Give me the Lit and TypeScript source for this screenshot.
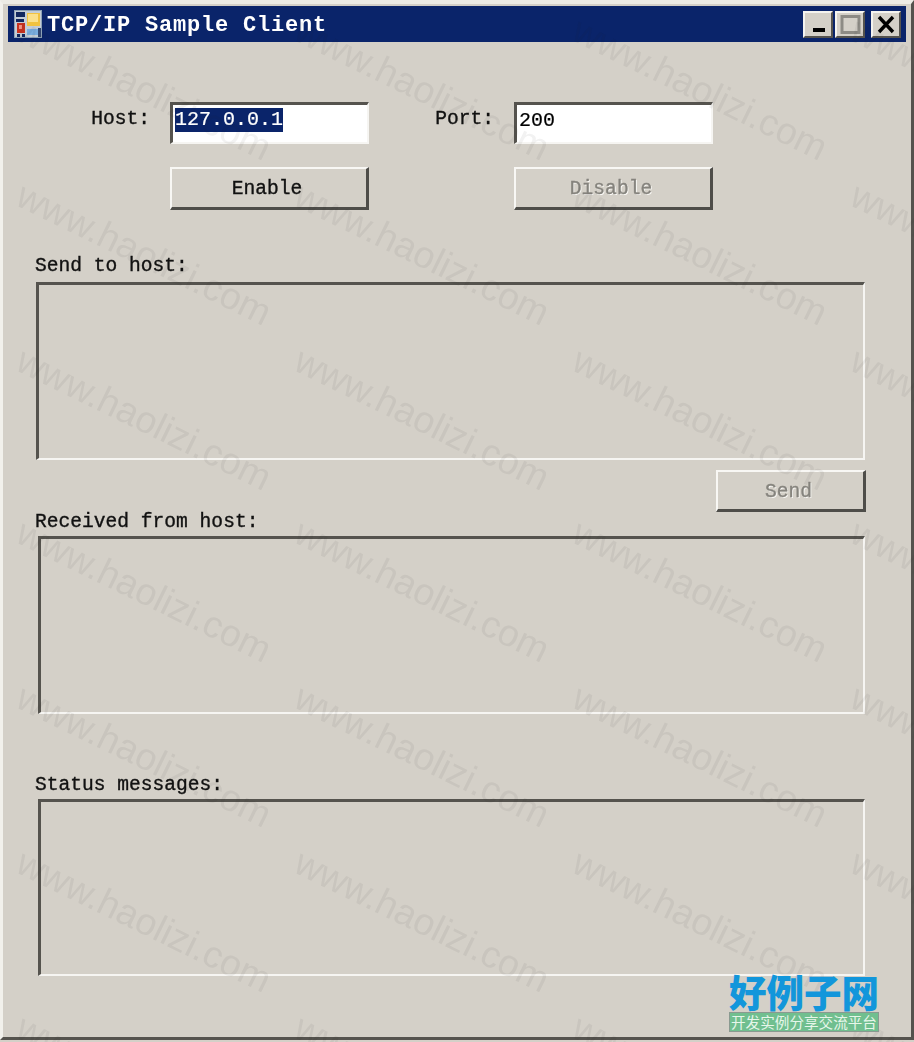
import { LitElement, html, css } from "lit";
import { customElement } from "lit/decorators.js";

const COLS = [144, 422, 700, 978];
const ROWS = [89, 254, 419, 591, 756, 921, 1086];

@customElement("app-root")
export class AppRoot extends LitElement {
  static styles = css`
    :host { display: block; width: 914px; height: 1042px; overflow: hidden; position: relative; background: #d4d0c8; }
    * { box-sizing: border-box; }
    .window {
      width: 914px; height: 1040px; background: #d4d0c8;
      border-top: 4px solid #ecebe5; border-left: 3px solid #f2f1ec;
      border-right: 3px solid #55534e; border-bottom: 3px solid #55534e;
      padding: 2px 5px 0 5px;
      font-family: "Liberation Mono", monospace; font-size: 19.6px; color: #111;
      -webkit-text-stroke: 0.35px currentColor;
      filter: blur(0.45px);
    }
    .titlebar {
      height: 36px; background: #0a246a; display: flex; align-items: center;
      padding: 0 5px 0 6px; color: #fff;
    }
    .appicon { width: 28px; height: 28px; flex: none; }
    .title { margin: 3px 0 0 5px; font-weight: 700; font-size: 22px; letter-spacing: 0.8px; -webkit-text-stroke: 0; }
    .caption { margin-left: auto; display: flex; gap: 2px; }
    .capbtn {
      width: 30px; height: 27px; background: #d4d0c8; display: flex; align-items: center; justify-content: center;
      border-top: 2px solid #f4f3ef; border-left: 2px solid #f4f3ef;
      border-right: 2px solid #55534e; border-bottom: 2px solid #55534e;
    }
    .capbtn.close { margin-left: 4px; }
    .conn {
      display: grid; grid-template-columns: 162px 199px 145px 199px; grid-template-rows: 42px 43px;
      row-gap: 23px; margin-top: 60px;
    }
    .label { line-height: 24px; white-space: pre; }
    .conn .label { justify-self: end; align-self: start; padding-top: 5px; }
    .conn .host { padding-right: 20px; }
    .conn .port { padding-right: 20px; }
    .input {
      background: #fff; border-top: 3px solid #55534e; border-left: 3px solid #55534e;
      border-right: 2px solid #f6f5f2; border-bottom: 2px solid #f6f5f2;
      font-family: "Liberation Mono", monospace; font-size: 20px; line-height: 30px; padding: 1px 0 0 2px;
      color: #000; -webkit-text-stroke: 0.2px currentColor;
    }
    .sel { background: #0a246a; color: #fff; display: inline-block; height: 24px; line-height: 24px; margin-top: 2px; vertical-align: top; }
    .btn {
      background: #d4d0c8; border-top: 2px solid #f8f7f4; border-left: 2px solid #f8f7f4;
      border-right: 3px solid #4e4d49; border-bottom: 3px solid #4e4d49;
      display: flex; align-items: center; justify-content: center; font-family: inherit; font-size: 19.6px; color: #111; padding: 0 4px 0 0;
    }
    .btn span { position: relative; top: 1px; }
    .btn.off { color: #85837d; text-shadow: 1px 1px 0 #fbfaf7; }
    .box {
      background: transparent; border-top: 3px solid #55534e; border-left: 3px solid #55534e;
      border-right: 2px solid #f6f5f2; border-bottom: 2px solid #f6f5f2;
      height: 178px; width: 829px;
    }
    .send-label { margin: 44px 0 0 27px; }
    .send-box { margin: 4px 0 0 28px; }
    .send-row { display: flex; justify-content: flex-end; padding-right: 40px; margin-top: 10px; }
    .send-btn { width: 150px; height: 42px; }
    .recv-label { margin: -2px 0 0 27px; }
    .recv-box { margin: 2px 0 0 30px; width: 827px; }
    .stat-label { margin: 59px 0 0 27px; }
    .stat-box { margin: 2px 0 0 30px; width: 827px; height: 177px; }
    .marks { position: absolute; inset: 0; pointer-events: none; overflow: hidden; filter: blur(0.4px); }
    .mark {
      position: absolute; white-space: nowrap; font-family: "Liberation Sans", sans-serif; font-size: 37.6px;
      color: rgba(40, 38, 36, 0.058); transform: translate(-50%, -50%) rotate(26deg);
    }
    .brand { position: absolute; left: 729px; top: 970px; width: 150px; }
    .brand-name {
      color: #1296db; font-family: "Noto Sans CJK SC", sans-serif; font-weight: 900; font-size: 37.5px; line-height: 42px;
      white-space: nowrap; text-align: center;
    }
    .brand-sub {
      background: #70bf8f; color: #e6f6ea; border: 1px solid #8a9a90; height: 20px; line-height: 18px;
      font-family: "Noto Sans CJK SC", sans-serif; font-size: 14.6px; text-align: center; white-space: nowrap;
    }
  `;

  render() {
    return html`
      <div class="window">
        <div class="titlebar">
          <svg class="appicon" viewBox="0 0 28 28">
            <rect width="28" height="28" fill="#8ea2b6"/>
            <rect x="1" y="1" width="26" height="26" fill="#c4cdd6"/>
            <rect x="2" y="2" width="9" height="5" fill="#12285f"/>
            <rect x="2" y="9" width="8" height="3" fill="#12285f"/>
            <rect x="13" y="3" width="13" height="13" fill="#f2c23e"/>
            <rect x="14" y="4" width="10" height="8" fill="#fbe08a"/>
            <rect x="3" y="13" width="8" height="10" fill="#c8321f"/>
            <rect x="5" y="15" width="3" height="4" fill="#f09080"/>
            <rect x="13" y="19" width="11" height="6" fill="#7aaee0"/>
            <rect x="24" y="18" width="3" height="9" fill="#31456f"/>
            <rect x="3" y="24" width="3" height="3" fill="#12285f"/>
            <rect x="8" y="24" width="3" height="3" fill="#12285f"/>
          </svg>
          <span class="title">TCP/IP Sample Client</span>
          <div class="caption">
            <div class="capbtn"><svg width="24" height="21" viewBox="0 0 24 21"><rect x="7" y="14" width="12" height="4" fill="#000"/></svg></div>
            <div class="capbtn"><svg width="24" height="21" viewBox="0 0 24 21"><rect x="4" y="2.5" width="17" height="16" fill="none" stroke="#8d8b85" stroke-width="3"/></svg></div>
            <div class="capbtn close"><svg width="24" height="21" viewBox="0 0 24 21"><path d="M5 3 L19 18 M19 3 L5 18" stroke="#000" stroke-width="3.4" fill="none"/></svg></div>
          </div>
        </div>
        <div class="conn">
          <div class="label host">Host:</div>
          <div class="input"><span class="sel">127.0.0.1</span></div>
          <div class="label port">Port:</div>
          <div class="input">200</div>
          <div></div>
          <button class="btn"><span>Enable</span></button>
          <div></div>
          <button class="btn off"><span>Disable</span></button>
        </div>
        <div class="label send-label">Send to host:</div>
        <div class="box send-box"></div>
        <div class="send-row"><button class="btn off send-btn"><span>Send</span></button></div>
        <div class="label recv-label">Received from host:</div>
        <div class="box recv-box"></div>
        <div class="label stat-label">Status messages:</div>
        <div class="box stat-box"></div>
      </div>
      <div class="marks">
        ${ROWS.map((y) => COLS.map((x) => html`<div class="mark" style="left:${x}px;top:${y}px">www.haolizi.com</div>`))}
      </div>
      <div class="brand">
        <div class="brand-name">好例子网</div>
        <div class="brand-sub">开发实例分享交流平台</div>
      </div>
    `;
  }
}
